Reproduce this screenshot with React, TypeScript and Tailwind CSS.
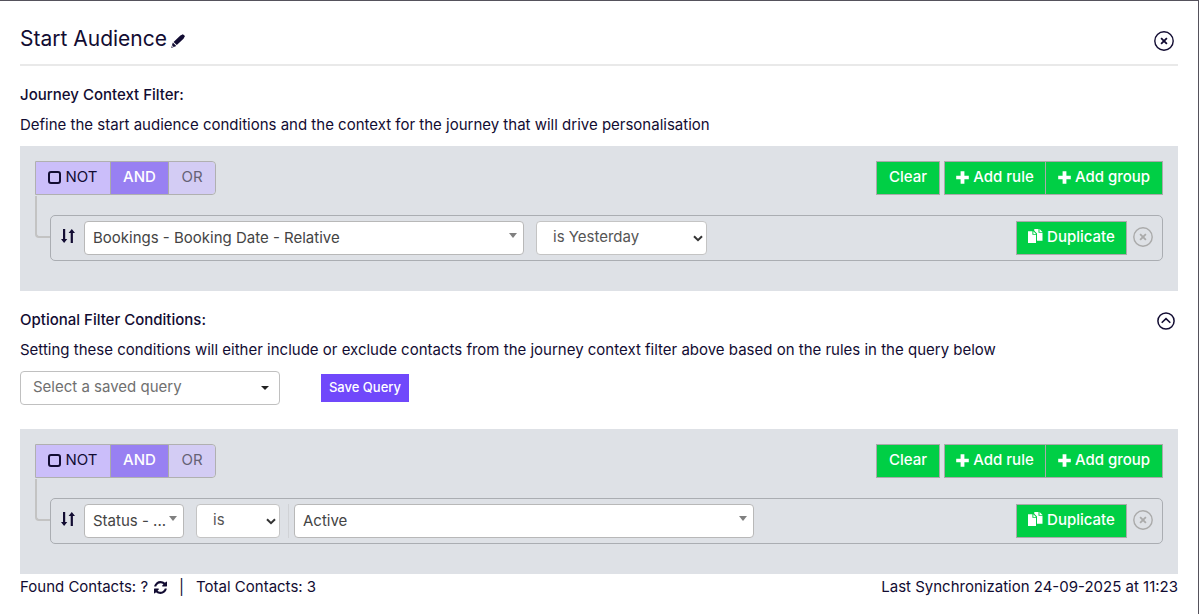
import type { ReactNode } from "react";
import clsx from "clsx";

type IconProps = { className?: string };

const PencilIcon = ({ className }: IconProps) => (
  <svg viewBox="0 0 13 13" className={className} fill="currentColor" aria-hidden="true">
    <path d="M10.2 0.6a1 1 0 0 1 1.4 0l0.9 0.9a1 1 0 0 1 0 1.4L11.6 4.4 5.4 10.3 2.4 7.4 8.7 1.5z" />
    <path d="M1.7 8 4.9 11.1 0.2 12.9z" />
    <path d="M1.3 10.4 2.4 11.5 1 12z" fill="#fff" />
  </svg>
);

const CircleXIcon = ({ className }: IconProps) => (
  <svg viewBox="0 0 20 20" className={className} fill="none" stroke="currentColor" aria-hidden="true">
    <circle cx="10" cy="10" r="9.2" strokeWidth="1.4" />
    <path d="M7.1 7.1 12.9 12.9M12.9 7.1 7.1 12.9" strokeWidth="1.8" />
  </svg>
);

const CircleUpIcon = ({ className }: IconProps) => (
  <svg viewBox="0 0 18 18" className={className} fill="none" stroke="currentColor" aria-hidden="true">
    <circle cx="9" cy="9" r="8.1" strokeWidth="1.5" />
    <path d="M4.7 10.8 9 6.6 13.3 10.8" strokeWidth="1.6" />
  </svg>
);

const SortIcon = ({ className }: IconProps) => (
  <svg viewBox="0 0 14 14" className={className} fill="currentColor" aria-hidden="true">
    <path d="M2 0h2.2v10H6.3L3.1 14 0 10H2z" />
    <path d="M9.7 14h2.2V4H14L10.8 0 7.6 4H9.7z" />
  </svg>
);

const PlusIcon = ({ className }: IconProps) => (
  <svg viewBox="0 0 13 13" className={className} fill="currentColor" aria-hidden="true">
    <path d="M4.6 0.3h3.8v4.4H12.8v3.6H8.4v4.5H4.6V8.3H0.2V4.7H4.6z" />
  </svg>
);

const DuplicateIcon = ({ className }: IconProps) => (
  <svg viewBox="0 0 15 14" className={className} fill="currentColor" aria-hidden="true">
    <path d="M0 2.2h4.4v3.6h3.6v8.2H0z" />
    <path d="M5.4 2.2 8 4.9H5.4z" />
    <path d="M6.3 0h4.2v3.8H14.5v8H9V4.6L6.3 1.7z" />
    <path d="M11.5 0 14.5 2.9H11.5z" />
  </svg>
);

const RefreshIcon = ({ className }: IconProps) => (
  <svg viewBox="0 0 1536 1536" className={className} fill="currentColor" aria-hidden="true">
    <path d="M1511 928q0 5-1 7-64 268-268 434.5t-478 166.5q-146 0-282.5-55t-243.5-157l-129 129q-19 19-45 19t-45-19-19-45v-448q0-26 19-45t45-19h448q26 0 45 19t19 45-19 45l-137 137q71 66 161 102t187 36q134 0 250-65t186-179q11-17 53-117 8-23 30-23h192q13 0 22.5 9.5t9.5 22.5zm25-800v448q0 26-19 45t-45 19h-448q-26 0-45-19t-19-45 19-45l138-138q-148-137-349-137-134 0-250 65t-186 179q-11 17-53 117-8 23-30 23h-199q-13 0-22.5-9.5t-9.5-22.5v-7q65-268 270-434.5t480-166.5q146 0 284 55.5t245 156.5l130-129q19-19 45-19t45 19 19 45z" />
  </svg>
);

const CaretIcon = ({ className }: IconProps) => (
  <svg viewBox="0 0 8 5" className={className} fill="currentColor" preserveAspectRatio="none" aria-hidden="true">
    <path d="M0 0h8L4 5z" />
  </svg>
);

const ChevronIcon = ({ className }: IconProps) => (
  <svg viewBox="0 0 10 7" className={className} fill="none" stroke="currentColor" strokeWidth="2" aria-hidden="true">
    <path d="M1 1.2 5 5.2 9 1.2" />
  </svg>
);

type SelectProps = {
  label: string;
  value: string;
  arrow: "caret" | "chevron" | "menu";
  className: string;
};

const Select = ({ label, value, arrow, className }: SelectProps) => (
  <div className={clsx("relative", className)}>
    <select
      aria-label={label}
      className={clsx(
        "h-[34px] w-full appearance-none rounded border bg-white",
        arrow === "caret" && "border-[#b8b8b8] pl-2 pr-4 text-[#444]",
        arrow === "chevron" && "border-[#c4c4c4] pl-4 pr-5 pb-0.5 text-[#555]",
        arrow === "menu" && "border-[#c0c0c0] pl-3 pr-6 pb-0.5 text-[#707070]"
      )}
    >
      <option>{value}</option>
    </select>
    {arrow === "caret" && (
      <CaretIcon className="pointer-events-none absolute right-[7px] top-[12px] h-[5px] w-[8px] text-[#808080]" />
    )}
    {arrow === "chevron" && (
      <ChevronIcon className="pointer-events-none absolute right-[4px] top-[14px] h-[7px] w-[10px] text-[#333]" />
    )}
    {arrow === "menu" && (
      <CaretIcon className="pointer-events-none absolute right-[11px] top-[15px] h-[4px] w-[8px] text-[#222]" />
    )}
  </div>
);

const GreenButton = ({ children, className }: { children: ReactNode; className?: string }) => (
  <button
    type="button"
    className={clsx(
      "flex h-[34px] items-center justify-center gap-1 border border-[#aaa] bg-[#00cf45] pb-0.5 font-medium text-white",
      className
    )}
  >
    {children}
  </button>
);

const QueryPanel = ({ name, children }: { name: string; children: ReactNode }) => (
  <section className="bg-[#dee1e6] px-[15px] pt-[15px] pb-[30px]">
    <div className="flex justify-between">
      <div className="flex h-[34px] rounded-r border border-[#b0b0b0]">
        <label className="flex w-[74px] items-center justify-center gap-1 bg-[#cbbefa] pb-0.5">
          <input
            type="checkbox"
            className="h-[13px] w-[13px] appearance-none rounded-[3px] border-2 border-[#120c32]"
          />
          NOT
        </label>
        <label className="flex w-[59px] items-center justify-center border-x border-[#aaa] bg-[#9880f2] pb-0.5 font-medium text-white">
          <input type="radio" name={name} defaultChecked className="sr-only" />
          AND
        </label>
        <label className="flex w-[46px] items-center justify-center rounded-r bg-[#d3ccf4] pb-0.5 text-[#666275]">
          <input type="radio" name={name} className="sr-only" />
          OR
        </label>
      </div>
      <div className="flex gap-1">
        <GreenButton className="w-[64px]">Clear</GreenButton>
        <div className="flex">
          <GreenButton className="w-[102px]">
            <PlusIcon className="h-[13px] w-[13px]" />
            Add rule
          </GreenButton>
          <GreenButton className="-ml-px w-[118px]">
            <PlusIcon className="h-[13px] w-[13px]" />
            Add group
          </GreenButton>
        </div>
      </div>
    </div>
    <div className="flex items-start">
      <div className="mt-px h-[42px] w-[15px] rounded-bl border-b-2 border-l-2 border-[#c3c3c3]" />
      <div className="mt-5 flex h-[46px] flex-1 items-center rounded-[5px] border border-[#aaadb2] pl-[10px] pr-[9px]">
        <button type="button" aria-label="Move rule" className="mr-[9px] mb-1">
          <SortIcon className="h-[14px] w-[14px]" />
        </button>
        {children}
        <GreenButton className="ml-auto w-[111px]">
          <DuplicateIcon className="mb-0.5 h-[14px] w-[15px]" />
          Duplicate
        </GreenButton>
        <button type="button" aria-label="Delete rule" className="mb-0.5 ml-[6px] text-[#aaa]">
          <CircleXIcon className="h-5 w-5" />
        </button>
      </div>
    </div>
  </section>
);

export default function App() {
  return (
    <div className="min-h-screen border-t border-r border-[#55525c] bg-white px-5 font-['Inter',sans-serif] text-[15px] leading-5 text-[#120c32]">
      <header className="flex h-[65px] items-center justify-between border-b-2 border-[#e9e9e9] pt-4">
        <div className="flex items-center gap-1 pb-[3px]">
          <h1 className="text-[21px] leading-7">Start Audience</h1>
          <button type="button" aria-label="Edit name">
            <PencilIcon className="mt-1 h-[14px] w-[14px]" />
          </button>
        </div>
        <button type="button" aria-label="Close" className="mr-1">
          <CircleXIcon className="h-5 w-5" />
        </button>
      </header>

      <main>
        <h2 className="mt-[19px] font-medium">Journey Context Filter:</h2>
        <p className="mt-[10px] mb-[11px]">
          Define the start audience conditions and the context for the journey that will drive personalisation
        </p>
        <QueryPanel name="context-condition">
          <Select label="Field" value="Bookings - Booking Date - Relative" arrow="caret" className="w-[440px]" />
          <Select label="Operator" value="is Yesterday" arrow="chevron" className="ml-3 w-[171px]" />
        </QueryPanel>

        <div className="mt-[19px] flex items-center justify-between">
          <h2 className="font-medium">Optional Filter Conditions:</h2>
          <button type="button" aria-label="Collapse" className="mt-0.5 mr-[3px]">
            <CircleUpIcon className="h-[18px] w-[18px]" />
          </button>
        </div>
        <p className="mt-[10px] mb-[11px]">
          Setting these conditions will either include or exclude contacts from the journey context filter above based on the rules in the query below
        </p>
        <div className="mb-6 flex items-center gap-[41px]">
          <Select label="Saved query" value="Select a saved query" arrow="menu" className="w-[260px]" />
          <button type="button" className="h-7 w-[88px] bg-[#7048fb] pb-0.5 text-[13px] font-medium text-white">
            Save Query
          </button>
        </div>
        <QueryPanel name="optional-condition">
          <Select label="Field" value="Status - ..." arrow="caret" className="w-[100px]" />
          <Select label="Operator" value="is" arrow="chevron" className="ml-3 w-[84px]" />
          <div className="ml-2 h-[34px] border-l border-[#d0d2d6] pl-[5px]">
            <Select label="Value" value="Active" arrow="caret" className="w-[460px]" />
          </div>
        </QueryPanel>
      </main>

      <footer className="flex justify-between pt-[3px]">
        <div className="flex items-center">
          <span>Found Contacts: ?</span>
          <button type="button" aria-label="Refresh" className="ml-[6px]">
            <RefreshIcon className="h-[13px] w-[13px]" />
          </button>
          <span className="mx-3">|</span>
          <span>Total Contacts: 3</span>
        </div>
        <span>Last Synchronization 24-09-2025 at 11:23</span>
      </footer>
    </div>
  );
}
